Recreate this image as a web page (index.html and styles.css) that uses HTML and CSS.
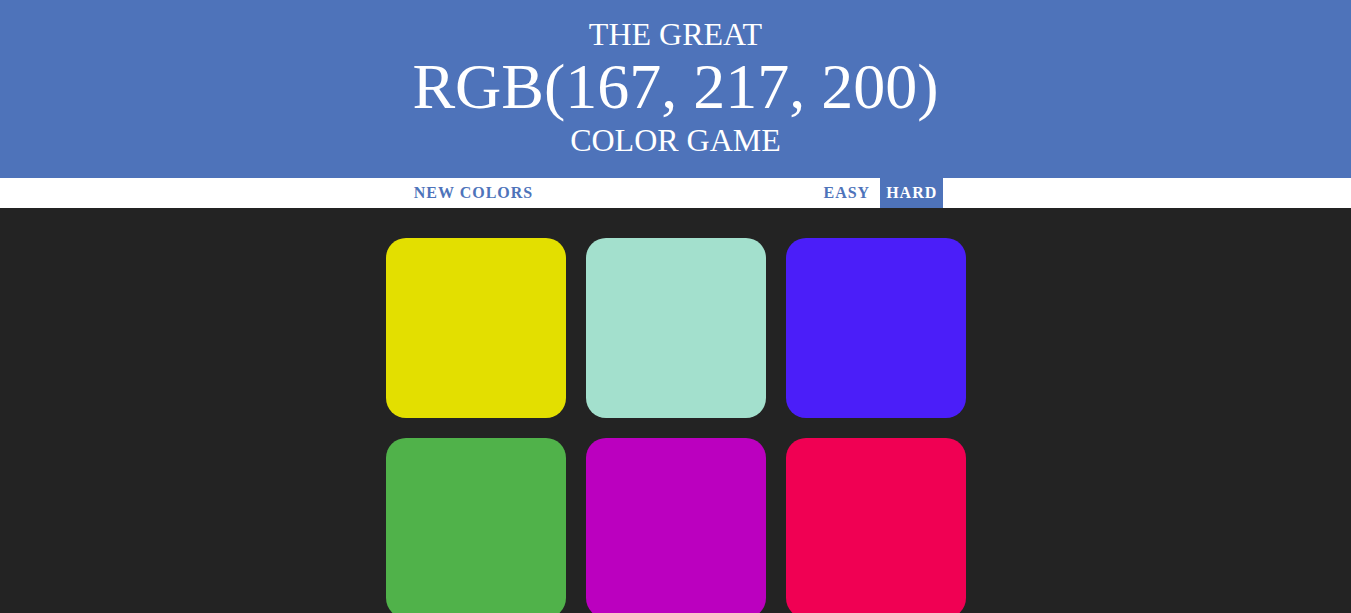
FILE: index.html
```html
<!DOCTYPE html>
<html>
<head>
<meta charset="utf-8">
<title>Color Game</title>
<link rel="stylesheet" href="styles.css">
</head>
<body>
<h1 class="title">The Great<br><span class="color-display">RGB(167, 217, 200)</span><br>Color Game</h1>
<div class="stripe">
  <button class="btn">New Colors</button>
  <span class="message"></span>
  <button class="btn">Easy</button>
  <button class="btn selected">Hard</button>
</div>
<div class="board">
  <div class="square sq-yellow"></div>
  <div class="square sq-mint"></div>
  <div class="square sq-violet"></div>
  <div class="square sq-green"></div>
  <div class="square sq-magenta"></div>
  <div class="square sq-red"></div>
</div>
</body>
</html>
```

FILE: styles.css
```css
html, body {
  margin: 0;
  padding: 0;
}
body {
  background: #232323;
  font-family: "Liberation Serif", "Times New Roman", serif;
  font-size: 16px;
  overflow: hidden;
}
.title {
  margin: 0;
  padding: 17px 0 20px;
  background: #4e73ba;
  color: #fff;
  text-align: center;
  text-transform: uppercase;
  font-weight: normal;
  font-size: 32px;
  line-height: 1.1;
}
.color-display {
  font-size: 200%;
}
.stripe {
  background: #fff;
  height: 30px;
  display: flex;
  justify-content: center;
  gap: 4px;
}
.btn {
  border: none;
  background: none;
  height: 100%;
  padding: 1px 6px;
  margin: 0;
  font-family: inherit;
  font-size: 16px;
  font-weight: 700;
  letter-spacing: 1px;
  text-transform: uppercase;
  color: #4e73ba;
  cursor: pointer;
}
.btn.selected {
  background: #4e73ba;
  color: #fff;
}
.message {
  width: 20%;
}
.board {
  width: 580px;
  margin: 20px auto;
  padding: 10px;
  display: grid;
  grid-template-columns: repeat(3, 180px);
  gap: 20px;
}
.square {
  height: 180px;
  border-radius: 20px;
}
.sq-yellow { background: #e3df00; }
.sq-mint { background: #a3e0cd; }
.sq-violet { background: #4b1ef9; }
.sq-green { background: #50b24a; }
.sq-magenta { background: #bb00bf; }
.sq-red { background: #f00053; }
```
